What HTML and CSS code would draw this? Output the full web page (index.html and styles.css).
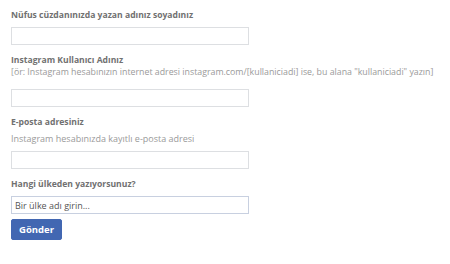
FILE: index.html
```html
<!DOCTYPE html>
<html lang="tr">
<head>
<meta charset="utf-8">
<link rel="stylesheet" href="styles.css">
</head>
<body>
<form class="form">
  <div class="field field-first">
    <label class="label">Nüfus cüzdanınızda yazan adınız soyadınız</label>
    <input class="input" type="text">
  </div>
  <div class="field">
    <label class="label">Instagram Kullanıcı Adınız</label>
    <div class="hint hint-tight">[ör: Instagram hesabınızın internet adresi instagram.com/[kullaniciadi] ise, bu alana "kullaniciadi" yazın]</div>
    <input class="input input-after-hint" type="text">
  </div>
  <div class="field">
    <label class="label">E-posta adresiniz</label>
    <div class="hint hint-loose">Instagram hesabınızda kayıtlı e-posta adresi</div>
    <input class="input" type="text">
  </div>
  <div class="field field-last">
    <label class="label">Hangi ülkeden yazıyorsunuz?</label>
    <input class="input input-focus" type="text" placeholder="Bir ülke adı girin...">
  </div>
  <button class="button" type="button">Gönder</button>
</form>
</body>
</html>
```
FILE: styles.css
```css
html, body {
  margin: 0;
  padding: 0;
  background: #ffffff;
}
body {
  font-family: "Open Sans", "Liberation Sans", sans-serif;
  font-size: 8px;
  color: #6f6f6f;
}
.form {
  display: flex;
  flex-direction: column;
  align-items: flex-start;
  padding: 9px 0 0 11px;
}
.field {
  display: flex;
  flex-direction: column;
  align-items: flex-start;
  margin-bottom: 9px;
}
.field-last {
  margin-bottom: 5px;
}
.label {
  display: block;
  font-weight: 700;
  font-size: 8.6px;
  line-height: 12px;
  color: #717171;
  margin-bottom: 6px;
}
.hint {
  font-size: 9px;
  line-height: 12px;
  color: #9a9a9a;
  white-space: nowrap;
}
.hint-tight {
  font-size: 8.8px;
  margin-top: -6px;
  margin-bottom: 11px;
}
.hint-loose {
  margin-top: -1px;
  margin-bottom: 6px;
}
.input {
  box-sizing: border-box;
  width: 238px;
  height: 18px;
  margin: 0;
  padding: 0 3px;
  border: 1px solid #dddfe2;
  border-radius: 0;
  background: #ffffff;
  font-family: inherit;
  font-size: 9px;
  color: #1d2129;
  outline: none;
}
.input-focus {
  border-color: #c8d0e0;
}
.input::placeholder {
  color: #555555;
}
.button {
  box-sizing: border-box;
  width: 51px;
  height: 21px;
  padding: 0;
  border: 1px solid #4267b2;
  border-radius: 2px;
  background: #4267b2;
  color: #ffffff;
  font-family: inherit;
  font-weight: 700;
  font-size: 9.5px;
  cursor: pointer;
}
```
